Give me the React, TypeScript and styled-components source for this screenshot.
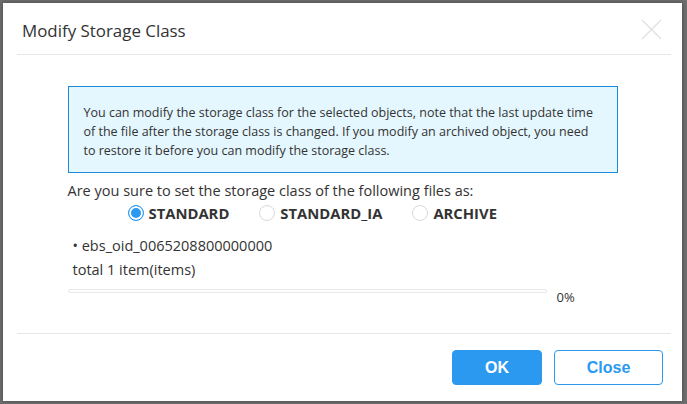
import styled, { createGlobalStyle } from "styled-components";

const GlobalStyle = createGlobalStyle`
  html, body {
    margin: 0;
    padding: 0;
    background: #6e6e6e;
  }
  body {
    font-family: "Open Sans", "Noto Sans", Arial, sans-serif;
    color: #333333;
  }
`;

const Backdrop = styled.div`
  width: 687px;
  height: 404px;
  padding: 3px 0 0 3px;
  box-sizing: border-box;
  background: #6e6e6e;
`;

const Modal = styled.div`
  display: flex;
  flex-direction: column;
  width: 679px;
  height: 398px;
  background: #ffffff;
  box-shadow: 0 0 4px rgba(0, 0, 0, 0.4);
`;

const Header = styled.div`
  display: flex;
  justify-content: space-between;
  align-items: center;
  height: 52px;
  margin: 0 11px 0 14px;
  border-bottom: 1px solid #e6e6e6;
  box-sizing: border-box;
`;

const Title = styled.h3`
  margin: 3px 0 0 5px;
  font-size: 16.9px;
  font-weight: 400;
  color: #333333;
`;

const CloseIcon = styled.button`
  display: flex;
  border: none;
  background: none;
  padding: 0;
  margin: 2px 9px 0 0;
  cursor: pointer;
`;

const Body = styled.div`
  flex: 1;
  display: flex;
  flex-direction: column;
  width: 550px;
  margin: 31px auto 0;
`;

const Notice = styled.div`
  padding: 16px 15px 12px;
  background: #e4f6fe;
  border: 1px solid #1f8ad9;
  font-size: 12.5px;
  line-height: 19px;
  color: #333333;
`;

const Question = styled.p`
  margin: 8px 0 0;
  font-size: 14.5px;
  line-height: 20px;
`;

const RadioRow = styled.div`
  display: flex;
  align-items: center;
  gap: 30px;
  padding-left: 60px;
  height: 24px;
`;

const RadioLabel = styled.label`
  display: flex;
  align-items: center;
  gap: 5px;
  font-size: 14.8px;
  font-weight: 700;
  color: #333333;
  cursor: pointer;
`;

const RadioDot = styled.span<{ $checked?: boolean }>`
  width: 16px;
  height: 16px;
  box-sizing: border-box;
  border-radius: 50%;
  border: 1px solid ${(p) => (p.$checked ? "#2b99f0" : "#d9d9d9")};
  background: ${(p) => (p.$checked ? "#2b99f0" : "#ffffff")};
  box-shadow: ${(p) => (p.$checked ? "inset 0 0 0 2px #ffffff" : "none")};
`;

const FileItem = styled.div`
  margin-top: 11px;
  padding-left: 5px;
  font-size: 14.5px;
  line-height: 20px;
`;

const Total = styled.div`
  margin-top: 4px;
  padding-left: 5px;
  font-size: 14.5px;
  line-height: 20px;
`;

const ProgressRow = styled.div`
  display: flex;
  align-items: flex-start;
  gap: 10px;
  margin-top: 9px;
`;

const ProgressTrack = styled.div`
  width: 479px;
  height: 4px;
  box-sizing: border-box;
  border: 1px solid #e8e8e8;
  border-radius: 2px;
  background: #ffffff;
`;

const Percent = styled.span`
  margin-top: -2px;
  font-size: 13px;
  line-height: 20px;
  color: #333333;
`;

const Footer = styled.div`
  display: flex;
  justify-content: flex-end;
  gap: 12px;
  margin: 0 11px 0 14px;
  padding: 16px 8px 16px 0;
  border-top: 1px solid #e6e6e6;
`;

const Button = styled.button<{ $primary?: boolean }>`
  height: 35px;
  min-width: ${(p) => (p.$primary ? "90px" : "109px")};
  border-radius: 4px;
  border: 1px solid #2b99f0;
  background: ${(p) => (p.$primary ? "#2b99f0" : "#ffffff")};
  color: ${(p) => (p.$primary ? "#ffffff" : "#2b99f0")};
  font-family: "Liberation Sans", "Noto Sans", Arial, sans-serif;
  font-size: 16px;
  font-weight: 700;
  cursor: pointer;
`;

const options = [
  { label: "STANDARD", checked: true },
  { label: "STANDARD_IA", checked: false },
  { label: "ARCHIVE", checked: false },
];

const App = () => {
  return (
    <>
      <GlobalStyle />
      <Backdrop>
        <Modal>
          <Header>
            <Title>Modify Storage Class</Title>
            <CloseIcon aria-label="close">
              <svg width="21" height="21" viewBox="0 0 21 21">
                <path d="M1 1 L20 20 M20 1 L1 20" stroke="#e0e0e0" strokeWidth="1.3" />
              </svg>
            </CloseIcon>
          </Header>
          <Body>
            <Notice>
              You can modify the storage class for the selected objects, note that the last update time
              of the file after the storage class is changed. If you modify an archived object, you need
              to restore it before you can modify the storage class.
            </Notice>
            <Question>Are you sure to set the storage class of the following files as:</Question>
            <RadioRow>
              {options.map((o) => (
                <RadioLabel key={o.label}>
                  <RadioDot $checked={o.checked} />
                  {o.label}
                </RadioLabel>
              ))}
            </RadioRow>
            <FileItem>• ebs_oid_0065208800000000</FileItem>
            <Total>total 1 item(items)</Total>
            <ProgressRow>
              <ProgressTrack />
              <Percent>0%</Percent>
            </ProgressRow>
          </Body>
          <Footer>
            <Button $primary>OK</Button>
            <Button>Close</Button>
          </Footer>
        </Modal>
      </Backdrop>
    </>
  );
};

export default App;
